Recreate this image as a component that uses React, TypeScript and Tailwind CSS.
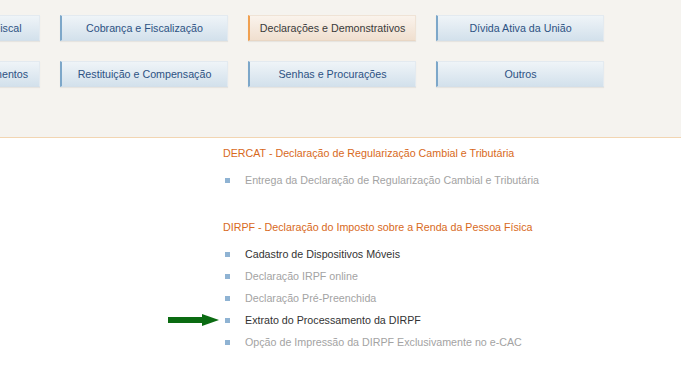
const menuRows = [
  ["Certidões e Situação Fiscal", "Cobrança e Fiscalização", "Declarações e Demonstrativos", "Dívida Ativa da União"],
  ["Pagamentos e Parcelamentos", "Restituição e Compensação", "Senhas e Procurações", "Outros"],
];

const sections = [
  {
    title: "DERCAT - Declaração de Regularização Cambial e Tributária",
    items: [{ label: "Entrega da Declaração de Regularização Cambial e Tributária", active: false }],
  },
  {
    title: "DIRPF - Declaração do Imposto sobre a Renda da Pessoa Física",
    items: [
      { label: "Cadastro de Dispositivos Móveis", active: true },
      { label: "Declaração IRPF online", active: false },
      { label: "Declaração Pré-Preenchida", active: false },
      { label: "Extrato do Processamento da DIRPF", active: true, arrow: true },
      { label: "Opção de Impressão da DIRPF Exclusivamente no e-CAC", active: false },
    ],
  },
];

const MenuButton = ({ label }: { label: string }) => {
  const selected = label === "Declarações e Demonstrativos";
  return (
    <div
      className={`w-[168px] h-[26px] shrink-0 flex items-center justify-center whitespace-nowrap border-t border-r border-b border-l-2 text-[10.7px] shadow-[0_1px_1px_rgba(0,0,0,0.06)] ${
        selected
          ? "border-t-[#efe3d6] border-r-[#efe3d6] border-b-[#e8d6c4] border-l-[#f0a050] bg-gradient-to-b from-[#faf3ec] to-[#f0dfcf] text-[#3a3a3a]"
          : "border-t-[#e3eaf0] border-r-[#e3eaf0] border-b-[#d3dfe9] border-l-[#7da7c9] bg-gradient-to-b from-[#eff4f8] to-[#d3e1ec] text-[#2d5283]"
      }`}
    >
      {label}
    </div>
  );
};

const Arrow = () => (
  <svg width="52" height="12" viewBox="0 0 52 12" className="absolute left-[-55px] top-[5px]">
    <rect x="0" y="3" width="36" height="6" fill="#0b6b12" />
    <polygon points="34,0 51,6 34,12" fill="#0b6b12" />
  </svg>
);

export default function App() {
  return (
    <div className="w-[681px] h-[370px] bg-white overflow-hidden font-['Liberation_Sans',Arial,sans-serif]">
      {/* menu */}
      <div className="h-[138px] bg-[#f5f3ef] border-b border-[#f2d5b2] pt-[15px] flex flex-col gap-[20px]">
        {menuRows.map((row, i) => (
          <div key={i} className="flex gap-[20px] ml-[-128px]">
            {row.map((label) => (
              <MenuButton key={label} label={label} />
            ))}
          </div>
        ))}
      </div>

      {/* content */}
      <div className="ml-[223px] pt-[7px] flex flex-col gap-[28px]">
        {sections.map((s) => (
          <div key={s.title}>
            <h3 className="text-[10.7px] leading-[16px] text-[#d8691c] mb-[8px]">{s.title}</h3>
            <ul>
              {s.items.map((it) => (
                <li key={it.label} className="relative h-[22px] flex items-center text-[10.7px]">
                  {it.arrow && <Arrow />}
                  <span className="w-[5px] h-[5px] ml-[2px] mr-[15px] bg-[#8fb3d3]" />
                  <span className={it.active ? "text-[#333333]" : "text-[#a3a3a3]"}>{it.label}</span>
                </li>
              ))}
            </ul>
          </div>
        ))}
      </div>
    </div>
  );
}
